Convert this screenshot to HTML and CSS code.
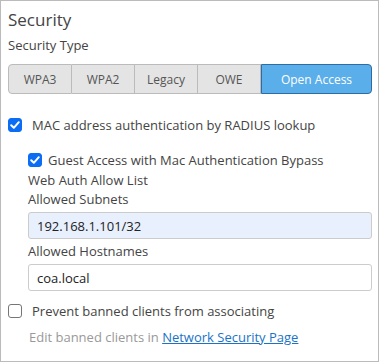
FILE: index.html
```html
<!DOCTYPE html>
<html>
<head>
<meta charset="utf-8">
<link rel="stylesheet" href="styles.css">
</head>
<body>
<div class="card">
  <div class="title">Security</div>
  <div class="label">Security Type</div>
  <div class="seg">
    <div class="seg-btn w1">WPA3</div>
    <div class="seg-btn w1">WPA2</div>
    <div class="seg-btn w1">Legacy</div>
    <div class="seg-btn w1">OWE</div>
    <div class="seg-btn active">Open Access</div>
  </div>
  <div class="check-row top">
    <span class="cb checked"><svg viewBox="0 0 14 14" width="14" height="14"><path d="M3.2 7.2 L5.8 9.8 L10.8 4.2" fill="none" stroke="#fff" stroke-width="2" stroke-linecap="round" stroke-linejoin="round"/></svg></span>
    <span class="check-label">MAC address authentication by RADIUS lookup</span>
  </div>
  <div class="indent">
    <div class="check-row">
      <span class="cb checked"><svg viewBox="0 0 14 14" width="14" height="14"><path d="M3.2 7.2 L5.8 9.8 L10.8 4.2" fill="none" stroke="#fff" stroke-width="2" stroke-linecap="round" stroke-linejoin="round"/></svg></span>
      <span class="check-label">Guest Access with Mac Authentication Bypass</span>
    </div>
    <div class="sub first">Web Auth Allow List</div>
    <div class="sub">Allowed Subnets</div>
    <div class="input filled">192.168.1.101/32</div>
    <div class="sub gap">Allowed Hostnames</div>
    <div class="input">coa.local</div>
  </div>
  <div class="check-row bottom">
    <span class="cb"></span>
    <span class="check-label">Prevent banned clients from associating</span>
  </div>
  <div class="hint">Edit banned clients in <a class="link" href="#">Network Security Page</a></div>
</div>
</body>
</html>
```
FILE: styles.css
```css
html, body {
  margin: 0;
  padding: 0;
  background: #fff;
}
body {
  font-family: "Open Sans", "Liberation Sans", sans-serif;
  color: #444;
}
.card {
  box-sizing: border-box;
  width: 379px;
  height: 362px;
  border: 1px solid #bbb;
  padding: 7px 6px 0 7px;
}
.title {
  font-size: 17px;
  line-height: 24px;
  color: #444;
}
.label {
  font-size: 13px;
  line-height: 18px;
  margin-top: 4px;
  color: #444;
}
.seg {
  display: flex;
  margin-top: 10px;
  height: 30px;
  box-sizing: border-box;
}
.seg-btn {
  box-sizing: border-box;
  display: flex;
  align-items: center;
  justify-content: center;
  font-size: 12px;
  color: #555;
  background: #e4e4e4;
  border: 1px solid #bbb;
  border-left: none;
  height: 30px;
}
.seg-btn.w1 { width: 63px; }
.seg-btn:first-child {
  border-left: 1px solid #bbb;
  border-radius: 4px 0 0 4px;
  width: 64px;
}
.seg-btn.active {
  flex: 1;
  background: #5aaee9;
  color: #fff;
  border: 1px solid #2d6da3;
  border-radius: 0 4px 4px 0;
}
.check-row {
  display: flex;
  align-items: center;
  font-size: 13px;
  line-height: 18px;
  color: #444;
}
.check-row.top { margin-top: 22px; }
.check-row.bottom { margin-top: 11px; }
.cb {
  box-sizing: border-box;
  width: 14px;
  height: 14px;
  border: 1px solid #767676;
  border-radius: 3px;
  background: #fff;
  display: inline-flex;
  flex: none;
}
.cb.checked {
  background: #0b6cf4;
  border-color: #0b6cf4;
}
.cb svg { display: block; margin: -1px; }
.check-label { margin-left: 10px; }
.indent {
  padding-left: 20px;
  margin-top: 17px;
}
.indent .check-label { margin-left: 6px; }
.sub {
  font-size: 13px;
  line-height: 19px;
  color: #444;
}
.sub.first { margin-top: 2px; }
.sub.gap { margin-top: 3px; }
.input {
  box-sizing: border-box;
  height: 27px;
  margin-top: 3px;
  border: 1px solid #ccc;
  border-radius: 3px;
  padding: 0 8px;
  display: flex;
  align-items: center;
  font-size: 13px;
  color: #222;
  background: #fff;
}
.input.filled {
  background: #e8f0fe;
}
.hint {
  margin-top: 8px;
  padding-left: 21px;
  font-size: 13px;
  line-height: 18px;
  color: #999;
}
.link {
  color: #1a73c8;
  text-decoration: underline;
}
```
